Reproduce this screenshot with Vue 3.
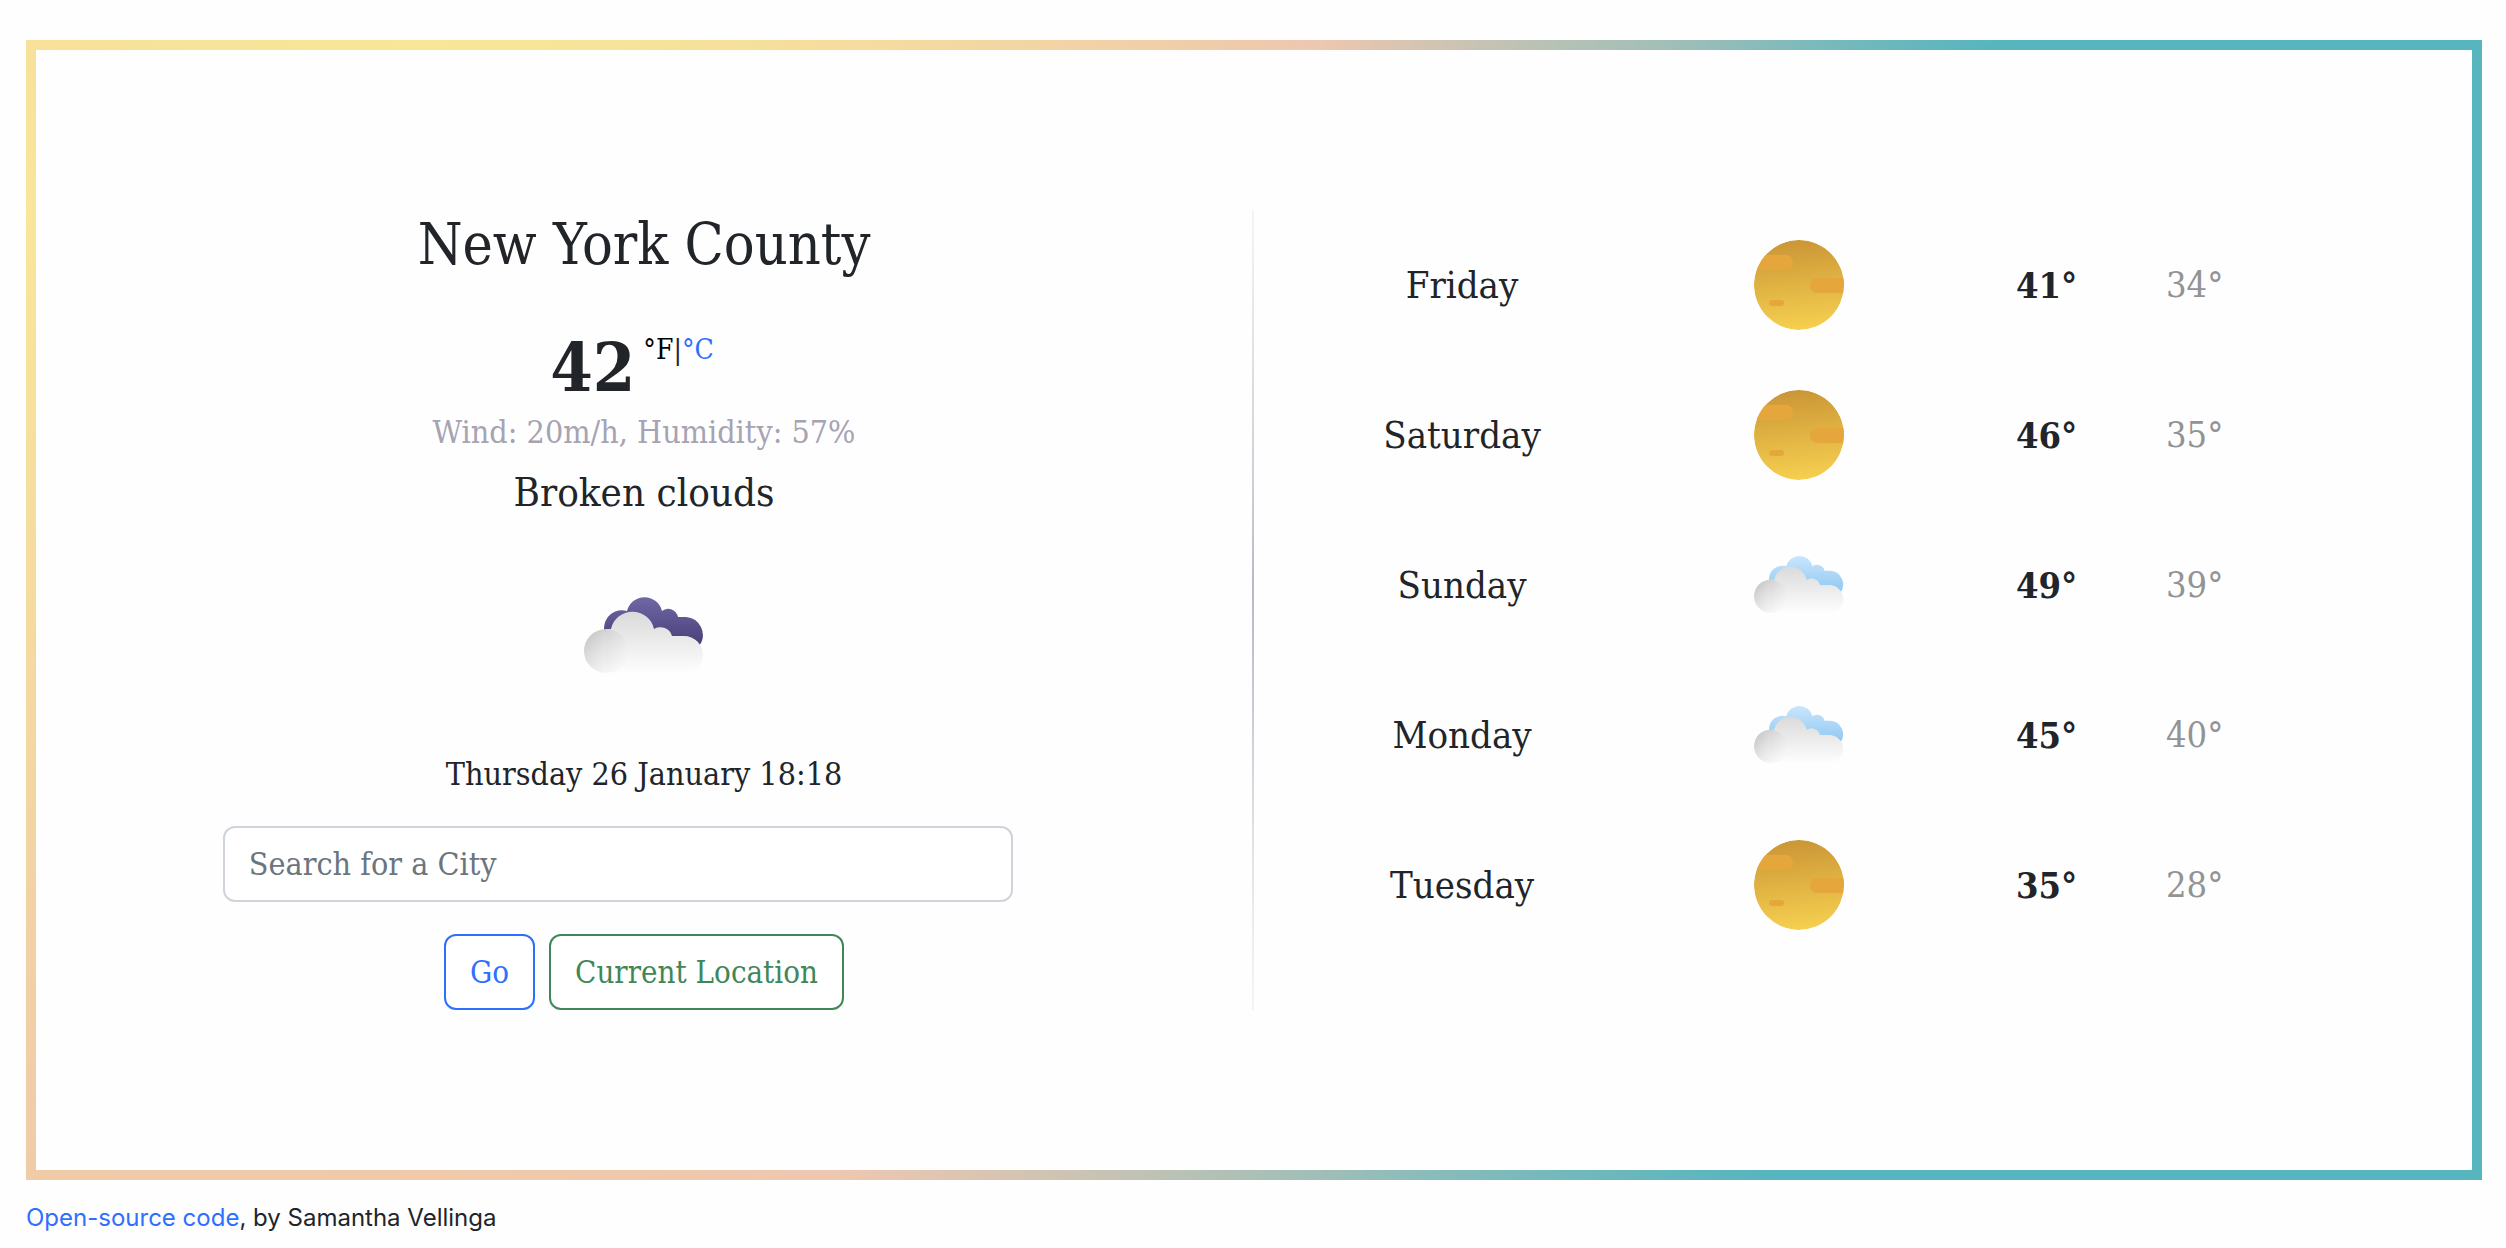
<script setup>
import { ref } from 'vue'

const city = ref('')
const days = [
  { name: 'Friday', icon: 'sun', high: 41, low: 34 },
  { name: 'Saturday', icon: 'sun', high: 46, low: 35 },
  { name: 'Sunday', icon: 'cloud', high: 49, low: 39 },
  { name: 'Monday', icon: 'cloud', high: 45, low: 40 },
  { name: 'Tuesday', icon: 'sun', high: 35, low: 28 },
]
</script>

<template>
  <svg class="defs" aria-hidden="true">
    <defs>
      <linearGradient id="sunFill" x1="0.45" y1="0" x2="0.55" y2="1">
        <stop offset="0" stop-color="#cb9636" />
        <stop offset="1" stop-color="#f6d050" />
      </linearGradient>
      <linearGradient id="nightFill" x1="0" y1="0" x2="0" y2="1">
        <stop offset="0" stop-color="#6f68a6" />
        <stop offset="1" stop-color="#41366e" />
      </linearGradient>
      <linearGradient id="dayFill" x1="0" y1="0" x2="0" y2="1">
        <stop offset="0" stop-color="#c9e6fc" />
        <stop offset="1" stop-color="#84c1f0" />
      </linearGradient>
      <linearGradient id="frontFill" x1="0" y1="0" x2="0" y2="1">
        <stop offset="0" stop-color="#dadada" />
        <stop offset="1" stop-color="#fefefe" />
      </linearGradient>
      <linearGradient id="puffFill" x1="0.1" y1="0.2" x2="0.75" y2="0.85">
        <stop offset="0" stop-color="#cbcbcb" />
        <stop offset="1" stop-color="#f3f3f3" stop-opacity="0.6" />
      </linearGradient>
      <clipPath id="sunClip"><circle cx="45" cy="45" r="45" /></clipPath>
      <path id="backCloud" d="M20 33A18 18 0 0 1 43 15A18 18 0 0 1 78 15A10 10 0 0 1 94 21H102A18 18 0 0 1 115 50L90 60H30Z" />
      <path id="frontCloud" d="M22 33L27 33A22 22 0 0 1 70 33A12 12 0 0 1 88 40H100A19 19 0 0 1 100 78H22Z" />
    </defs>
  </svg>
  <main class="frame">
    <section class="current">
      <h1>New York County</h1>
      <div class="temperature">
        <strong>42</strong>
        <span class="units"><a class="active" href="#f">°F</a>|<a href="#c">°C</a></span>
      </div>
      <p class="details">Wind: 20m/h, Humidity: 57%</p>
      <p class="condition">Broken clouds</p>
      <svg class="current-icon" viewBox="0 0 120 79" role="img" aria-label="Broken clouds">
        <use href="#backCloud" fill="url(#nightFill)" />
        <use href="#frontCloud" fill="url(#frontFill)" />
        <circle cx="22" cy="55" r="22" fill="url(#puffFill)" />
      </svg>
      <p class="date">Thursday 26 January 18:18</p>
      <form @submit.prevent>
        <input v-model="city" type="search" aria-label="Search for a City" placeholder="Search for a City" />
        <div class="buttons">
          <button class="go" type="submit">Go</button>
          <button class="location" type="button">Current Location</button>
        </div>
      </form>
    </section>
    <div class="divider"></div>
    <section class="forecast">
      <div v-for="day in days" :key="day.name" class="day">
        <span class="name">{{ day.name }}</span>
        <svg v-if="day.icon === 'sun'" class="sun" viewBox="0 0 90 90" aria-hidden="true">
          <g clip-path="url(#sunClip)">
            <circle cx="45" cy="45" r="45" fill="url(#sunFill)" />
            <rect x="-10" y="15" width="49" height="15" rx="7" fill="#e5a63c" />
            <rect x="56" y="38" width="50" height="15" rx="7" fill="#e5a63c" />
            <rect x="15" y="60" width="15" height="6" rx="3" fill="#e5a63c" />
          </g>
        </svg>
        <svg v-else class="cloud" viewBox="0 0 120 79" aria-hidden="true">
          <use href="#backCloud" fill="url(#dayFill)" />
          <use href="#frontCloud" fill="url(#frontFill)" />
          <circle cx="22" cy="55" r="22" fill="url(#puffFill)" />
        </svg>
        <span class="high">{{ day.high }}°</span>
        <span class="low">{{ day.low }}°</span>
      </div>
    </section>
  </main>
  <footer><a href="#source">Open-source code</a>, by Samantha Vellinga</footer>
</template>

<style>
body {
  margin: 0;
  background: #fefefe;
}
</style>

<style scoped>
.defs {
  position: absolute;
  width: 0;
  height: 0;
}
.frame {
  display: grid;
  grid-template-columns: calc(50% - 2px) 2px 50%;
  margin: 40px 24px 0 26px;
  padding: 160px 0;
  border: 10px solid;
  border-image: conic-gradient(#efcaac, #edc7b0 7deg, #a2bfb7 36deg, #56b5bf 53deg, #56b5bf 137deg, #a2bfb7 175deg, #edc7b0 216deg, #f0cba8 245deg, #f8e699 288deg, #f7e19b 295deg, #f8e797 304deg, #efcaac) 10;
  color: #212529;
  font-family: "DejaVu Serif Condensed", "Liberation Serif", serif;
  font-size: 32px;
  line-height: 48px;
}
a {
  color: #2f6fff;
  text-decoration: none;
}
h1,
p {
  margin: 0;
  font-weight: 400;
}
.current {
  display: flex;
  flex-direction: column;
  align-items: center;
}
h1 {
  padding-bottom: 48px;
  font-size: 57px;
  line-height: 68px;
}
.temperature {
  display: flex;
  gap: 8px;
  height: 82px;
  padding-right: 24px;
}
.temperature strong {
  font-size: 68px;
  line-height: 82px;
}
.units {
  font-size: 28px;
}
.units .active {
  color: #000;
}
.details {
  color: #a6a3b3;
}
.condition {
  padding: 12px 0 80px;
  font-size: 40px;
}
.current-icon {
  width: 120px;
  height: 79px;
}
.date {
  padding-top: 75px;
}
form {
  display: flex;
  flex-direction: column;
  align-items: center;
  align-self: stretch;
  gap: 32px;
  padding-top: 28px;
}
input,
button {
  box-sizing: border-box;
  height: 76px;
  padding: 0 24px;
  border: 2px solid;
  border-radius: 12px;
  background: #fff;
  font: inherit;
}
button {
  font-size: 31px;
}
input {
  width: 65%;
  margin-right: 52px;
  border-color: #ced4da;
}
input::placeholder {
  color: #6c757d;
  opacity: 1;
}
.buttons {
  display: flex;
  gap: 14px;
}
.go {
  color: #2f6fff;
}
.location {
  color: #3f8758;
}
.divider {
  background: linear-gradient(#f5f5f5, #cfccd6 35%, #b6bac6 47%, #c6cbd5 62%, #e2e0e6 78%, #f5f5f5);
}
.forecast {
  display: flex;
  flex-direction: column;
}
.day {
  display: grid;
  grid-template-columns: 416px 258px 238px 70px;
  align-items: center;
  height: 150px;
  font-size: 38px;
}
.name {
  text-align: center;
}
.sun,
.cloud {
  justify-self: center;
  width: 90px;
}
.high,
.low {
  font-size: 36px;
}
.high {
  padding-left: 88px;
  font-weight: 700;
}
.low {
  color: #929395;
}
footer {
  padding: 20px 26px;
  color: #212529;
  font-family: Inter, sans-serif;
  font-size: 24px;
  line-height: 36px;
}
</style>
